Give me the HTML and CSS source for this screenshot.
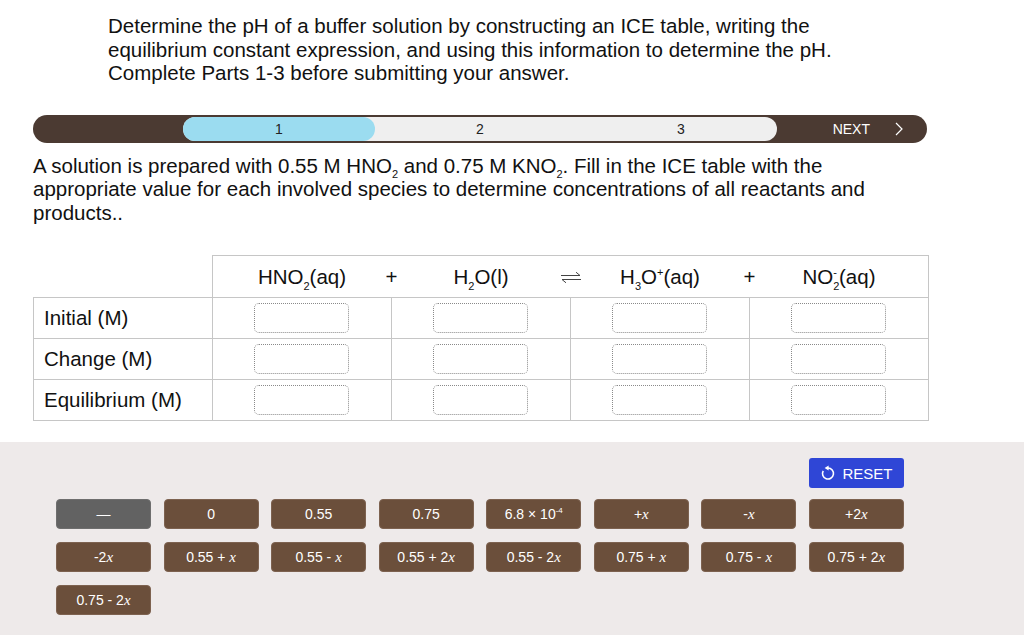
FILE: index.html
```html
<!DOCTYPE html>
<html lang="en">
<head>
    <meta charset="UTF-8">
    <title>Buffer pH - ICE Table</title>
    <link rel="stylesheet" href="styles.css">
</head>
<body>
    <p class="intro">Determine the pH of a buffer solution by constructing an ICE table, writing the<br>equilibrium constant expression, and using this information to determine the pH.<br>Complete Parts 1-3 before submitting your answer.</p>

    <div class="progress">
        <div class="track">
            <div class="step active">1</div>
            <div class="step mid">2</div>
            <div class="step">3</div>
        </div>
        <div class="next">
            <span>NEXT</span>
            <svg width="8" height="14" viewBox="0 0 8 14"><polyline points="1,1 7,7 1,13" fill="none" stroke="#fff" stroke-width="1.2"/></svg>
        </div>
    </div>

    <p class="question">A solution is prepared with 0.55 M HNO<sub>2</sub> and 0.75 M KNO<sub>2</sub>. Fill in the ICE table with the appropriate value for each involved species to determine concentrations of all reactants and products..</p>

    <table class="ice">
        <tr class="head">
            <td class="blank"></td>
            <td colspan="4" class="reaction">
                <div class="eq">
                    <div class="sp"><span>HNO<sub>2</sub>(aq)</span></div>
                    <div class="sp"><span>+</span></div>
                    <div class="sp"><span>H<sub>2</sub>O(l)</span></div>
                    <div class="sp">
                        <svg width="22" height="12" viewBox="0 0 22 12"><path d="M1 4.5 H20 L16 1.2" fill="none" stroke="#444" stroke-width="1"/><path d="M21 8.5 H2 L6 11.8" fill="none" stroke="#444" stroke-width="1"/></svg>
                    </div>
                    <div class="sp"><span>H<sub>3</sub>O<sup>+</sup>(aq)</span></div>
                    <div class="sp"><span>+</span></div>
                    <div class="sp"><span>NO<sub>2</sub><sup class="ion">-</sup>(aq)</span></div>
                </div>
            </td>
        </tr>
        <tr>
            <td class="label">Initial (M)</td>
            <td><div class="box"></div></td>
            <td><div class="box"></div></td>
            <td><div class="box"></div></td>
            <td><div class="box"></div></td>
        </tr>
        <tr>
            <td class="label">Change (M)</td>
            <td><div class="box"></div></td>
            <td><div class="box"></div></td>
            <td><div class="box"></div></td>
            <td><div class="box"></div></td>
        </tr>
        <tr>
            <td class="label">Equilibrium (M)</td>
            <td><div class="box"></div></td>
            <td><div class="box"></div></td>
            <td><div class="box"></div></td>
            <td><div class="box"></div></td>
        </tr>
    </table>

    <div class="tray">
        <div class="tray-top">
            <button class="reset">
                <svg width="16" height="16" viewBox="0 0 16 16"><path d="M8 3 A5.5 5.5 0 1 1 3.2 5.8" fill="none" stroke="#fff" stroke-width="1.6"/><polygon points="4.6,3 8.6,0.5 8.6,5.5" fill="#fff"/></svg>
                RESET
            </button>
        </div>
        <div class="choices">
            <button class="tile dash">—</button>
            <button class="tile">0</button>
            <button class="tile">0.55</button>
            <button class="tile">0.75</button>
            <button class="tile">6.8 × 10<sup>-4</sup></button>
            <button class="tile">+<i>x</i></button>
            <button class="tile">-<i>x</i></button>
            <button class="tile">+2<i>x</i></button>
            <button class="tile">-2<i>x</i></button>
            <button class="tile">0.55 + <i>x</i></button>
            <button class="tile">0.55 - <i>x</i></button>
            <button class="tile">0.55 + 2<i>x</i></button>
            <button class="tile">0.55 - 2<i>x</i></button>
            <button class="tile">0.75 + <i>x</i></button>
            <button class="tile">0.75 - <i>x</i></button>
            <button class="tile">0.75 + 2<i>x</i></button>
            <button class="tile">0.75 - 2<i>x</i></button>
        </div>
    </div>
</body>
</html>
```

FILE: styles.css
```css
body {
    margin: 0;
    font-family: "Liberation Sans", Arial, sans-serif;
    color: #111;
    background-color: white;
}

.intro {
    margin: 14px 0 0 108px;
    width: 760px;
    font-size: 20.5px;
    line-height: 23.5px;
    white-space: nowrap;
}

.progress {
    display: flex;
    margin: 30px 0 0 33px;
    width: 894px;
    height: 28px;
    padding: 2px 0 2px 150px;
    box-sizing: border-box;
    background-color: #4b3a32;
    border-radius: 14px;
}

.track {
    display: flex;
    width: 594px;
    background-color: #efefef;
    border-radius: 12px;
}

.step {
    width: 192px;
    display: flex;
    align-items: center;
    justify-content: center;
    font-size: 14px;
    color: #222;
}

.step.mid {
    width: 210px;
}

.step.active {
    background-color: #9bdcf0;
    border-radius: 12px;
}

.next {
    flex: 1;
    display: flex;
    align-items: center;
    justify-content: flex-end;
    gap: 25px;
    padding-right: 24px;
    color: white;
    font-size: 14px;
}

.question {
    margin: 11px 0 0 33px;
    width: 894px;
    font-size: 20.5px;
    line-height: 23.5px;
}

sub, sup {
    font-size: 11px;
    line-height: 0;
}

.question sub {
    vertical-align: -5px;
}

.ice {
    margin: 31px 0 0 33px;
    border-collapse: collapse;
    font-size: 20.5px;
}

.ice td {
    border: 1px solid #c6c6c6;
    width: 178px;
    height: 40px;
    padding: 0;
}

.ice td.blank {
    border-top: none;
    border-left: none;
}

.ice .head td {
    height: 41px;
}

.reaction {
    width: auto !important;
}

.eq {
    display: flex;
    align-items: center;
    padding-left: 44.75px;
}

.sp {
    width: 89.5px;
    display: flex;
    justify-content: center;
    align-items: center;
    white-space: nowrap;
    color: #111;
}

.sp sub {
    vertical-align: -6px;
}

.sp sup {
    vertical-align: 8px;
}

.sp sup.ion {
    margin-left: -6px;
    margin-right: 2px;
}

.label {
    padding-left: 10px !important;
    box-sizing: border-box;
}

.box {
    width: 93px;
    height: 28px;
    margin: 0 auto;
    border: 1px dotted #8a8a8a;
    border-radius: 5px;
}

.tray {
    margin-top: 21px;
    background-color: #eeeaea;
    height: 193px;
    padding: 16px 120px 0 56px;
}

.tray-top {
    display: flex;
    justify-content: flex-end;
    margin-bottom: 11px;
}

.reset {
    display: flex;
    align-items: center;
    justify-content: center;
    gap: 6px;
    width: 95px;
    height: 30px;
    border: none;
    border-radius: 3px;
    background-color: #2f46d6;
    color: white;
    font-family: "Liberation Sans", Arial, sans-serif;
    font-size: 15px;
    padding: 0;
}

.choices {
    display: grid;
    grid-template-columns: repeat(8, 95px);
    column-gap: 12.57px;
    row-gap: 13px;
}

.tile {
    height: 30px;
    border: 1px solid #7d6250;
    border-radius: 4px;
    background-color: #6b4f3b;
    color: white;
    font-family: "Liberation Sans", Arial, sans-serif;
    font-size: 14px;
    padding: 0;
}

.tile i {
    font-family: "Liberation Serif", serif;
    font-size: 15px;
}

.tile sup {
    font-size: 8px;
    vertical-align: 6px;
}

.tile.dash {
    background-color: #626262;
    border-color: #6e6e6e;
}
```
